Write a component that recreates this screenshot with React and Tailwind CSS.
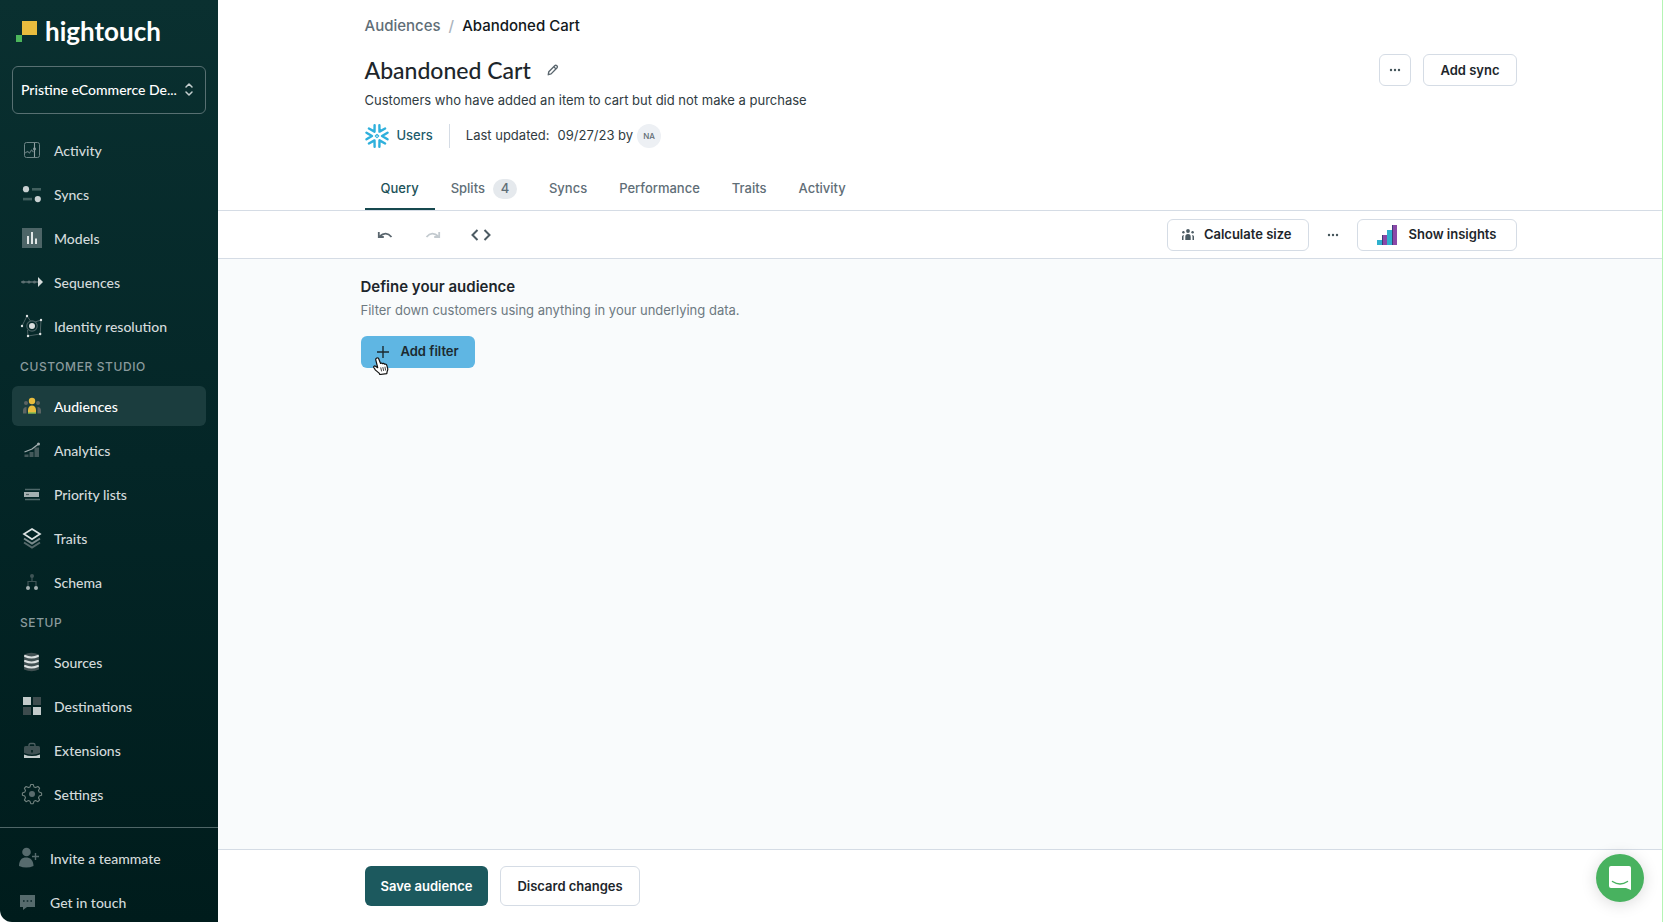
import React from "react";

const light = "#c9d1d2";

function Icon({ children }) {
  return (
    <svg width="24" height="24" viewBox="0 0 24 24" fill="none" className="shrink-0" aria-hidden="true">
      {children}
    </svg>
  );
}

const icons = {
  activity: (
    <Icon>
      <rect x="4.5" y="4.5" width="15" height="15" rx="2" stroke="#6f8587" strokeWidth="1" />
      <path d="M5 15l2.5-1.5 2 1.500 2-3 2 2" stroke="#5d7577" strokeWidth="1.1" />
      <path d="M14.5 5v14" stroke="#8fa0a2" strokeWidth="1.1" />
      <circle cx="14.5" cy="11" r="1.4" fill="#8fa0a2" />
    </Icon>
  ),
  syncs: (
    <Icon>
      <circle cx="6" cy="7.2" r="3.1" fill={light} />
      <rect x="12" y="6" width="9" height="2.6" fill="#42605f" />
      <rect x="3" y="15.8" width="9" height="2.6" fill="#42605f" />
      <circle cx="17.8" cy="17.1" r="3.1" fill={light} />
    </Icon>
  ),
  models: (
    <Icon>
      <rect x="2" y="2" width="20" height="20" fill="#4d6567" />
      <path d="M8 18V10M12 18V6M16 18v-5.5" stroke="#e1e6e6" strokeWidth="2" />
    </Icon>
  ),
  sequences: (
    <Icon>
      <path d="M1 12h17" stroke="#5d7072" strokeWidth="1.4" />
      <circle cx="3.4" cy="12" r="1.6" fill="#5d7072" />
      <circle cx="9" cy="12" r="1.6" fill="#5d7072" />
      <circle cx="14.5" cy="12" r="1.6" fill="#5d7072" />
      <path d="M18 7l5 5-5 5z" fill="#d5dbdb" />
    </Icon>
  ),
  identity: (
    <Icon>
      <circle cx="12" cy="12" r="5.2" stroke="#4a6163" strokeWidth="1.2" />
      <path d="M2 12l5-10 3.5 5M21 6l-.8 14-12.2 2-.5-6M15 8l6-2" stroke="#4a6163" strokeWidth="1" />
      <circle cx="12" cy="12" r="3" fill="#d9dddd" />
      <circle cx="2" cy="12" r="1.2" fill="#dfe4e4" />
      <circle cx="7" cy="2" r="1.2" fill="#dfe4e4" />
      <circle cx="21" cy="6" r="1.2" fill="#dfe4e4" />
      <circle cx="20.2" cy="20" r="1.2" fill="#dfe4e4" />
      <circle cx="8" cy="22" r="1.2" fill="#dfe4e4" />
    </Icon>
  ),
  audiences: (
    <Icon>
      <circle cx="6" cy="9" r="2" fill="#5b6463" />
      <circle cx="18" cy="9" r="2" fill="#5b6463" />
      <path d="M3 19.5v-3a3.5 3.5 0 0 1 3.5-3.500v6.500zM21 19.500v-3a3.500 3.500 0 0 0-3.500-3.500v6.500z" fill="#5b6463" />
      <circle cx="12" cy="7" r="3.2" fill="#e9bd3e" />
      <path d="M8 19.500v-3.500a4 4.500 0 0 1 8 0v3.500z" fill="#e9bd3e" />
      <path d="M8 18.500h8v1H8z" fill="#4cb65b" />
    </Icon>
  ),
  analytics: (
    <Icon>
      <path d="M4.500 19v-2.500h4V19zM9.500 19v-5h4v5zM14.500 19V9.500H19V19z" fill="#44595b" />
      <path d="M4.500 14l7.500-3 6.500-5" stroke="#a3afb0" strokeWidth="1.3" />
      <circle cx="18.5" cy="6" r="1.5" fill="#a3afb0" />
    </Icon>
  ),
  priority: (
    <Icon>
      <path d="M5 7.500h15M5 17.500h15" stroke="#50686a" strokeWidth="1.5" />
      <rect x="4" y="10" width="15" height="5" fill="#a4afb0" />
      <path d="M6 12.500h3" stroke="#4f5f61" strokeWidth="1.2" />
    </Icon>
  ),
  traits: (
    <Icon>
      <path d="M4 16.500l8 5 8-5" stroke="#56696b" strokeWidth="2" />
      <path d="M4 12.500l8 5 8-5" stroke="#7b8b8d" strokeWidth="2" />
      <path d="M12 3l8 5-8 5.300L4 8z" stroke="#dde3e3" strokeWidth="1.7" />
    </Icon>
  ),
  schema: (
    <Icon>
      <path d="M12 7v4.500M8 17v-5.500h8V17" stroke="#3f5456" strokeWidth="1.2" />
      <circle cx="12" cy="6" r="2" fill="#3f5456" />
      <circle cx="8" cy="18" r="2" fill="#a4b0b1" />
      <circle cx="16" cy="18" r="2" fill="#a4b0b1" />
    </Icon>
  ),
  sources: (
    <Icon>
      <path d="M4 4.500q7.500-3.500 15 0v15q-7.500 3.500-15 0z" fill="#405052" />
      <path d="M5 6q6.500 3 13 0M5 11q6.500 3 13 0M5 16q6.500 3 13 0" stroke="#dce2e2" strokeWidth="2" strokeLinecap="round" />
    </Icon>
  ),
  destinations: (
    <Icon>
      <rect x="3" y="3" width="8" height="8" fill="#c3cbcb" />
      <rect x="13" y="3" width="8" height="8" fill="#3d4c4e" />
      <rect x="3" y="13" width="8" height="8" fill="#3d4c4e" />
      <rect x="13" y="13" width="8" height="8" fill="#c3cbcb" />
    </Icon>
  ),
  extensions: (
    <Icon>
      <path d="M9 8.500V7q0-1.500 1.500-1.500h3Q15 5.500 15 7v1.500" stroke="#4f6062" strokeWidth="1.3" />
      <path d="M4 9.500Q4 8 5.500 8h13Q20 8 20 9.500V15q-8 3.500-16 0z" fill="#3f5153" />
      <path d="M4 16.500q8 3 16 0V20H4z" fill="#c6cece" />
      <rect x="11.2" y="12" width="1.6" height="2.5" fill="#01201f" />
    </Icon>
  ),
  settings: (
    <Icon>
      <path
        d="M10.8 2.500h2.400l.8 2.400 1.600.7 2.300-1.100 1.700 1.700-1.100 2.300.7 1.600 2.400.8v2.400l-2.400.8-.7 1.600 1.100 2.300-1.700 1.700-2.300-1.100-1.600.7-.8 2.400h-2.400l-.8-2.400-1.600-.7-2.300 1.100-1.700-1.700 1.100-2.300-.7-1.600-2.400-.8v-2.400l2.400-.8.7-1.600-1.100-2.300 1.700-1.700 2.300 1.100 1.600-.7z"
        stroke="#71827f"
        strokeWidth="1.1"
        strokeLinejoin="round"
      />
      <circle cx="12" cy="12" r="3" fill="#5a6c6e" />
    </Icon>
  ),
};

const primary = [
  ["activity", "Activity"],
  ["syncs", "Syncs"],
  ["models", "Models"],
  ["sequences", "Sequences"],
  ["identity", "Identity resolution"],
];
const studio = [
  ["audiences", "Audiences"],
  ["analytics", "Analytics"],
  ["priority", "Priority lists"],
  ["traits", "Traits"],
  ["schema", "Schema"],
];
const setup = [
  ["sources", "Sources"],
  ["destinations", "Destinations"],
  ["extensions", "Extensions"],
  ["settings", "Settings"],
];

function NavGroup({ title, items, active }) {
  return (
    <>
      {title && (
        <h2 className="flex h-8 items-center px-2 pt-[2px] font-['Inter',sans-serif] text-[12px] font-medium tracking-wider text-[#8a9b9d] uppercase">
          {title}
        </h2>
      )}
      {items.map(([icon, label]) => (
        <a
          key={label}
          href="#"
          aria-current={label === active ? "page" : undefined}
          className={`flex h-10 items-center gap-[10px] rounded-md px-2 text-[14px] font-medium ${
            label === active ? "bg-[#1b3d3e] text-white" : "text-[#d3dadb]"
          }`}
        >
          {icons[icon]}
          {label}
        </a>
      ))}
    </>
  );
}

function Sidebar() {
  return (
    <aside className="flex w-[218px] shrink-0 flex-col overflow-hidden rounded-bl-xl bg-linear-to-b from-[#0a3030] via-[#042627] to-[#001c1c] font-['Lato',sans-serif]">
      <a href="#" className="mb-1 flex h-[62px] items-center gap-2 px-4 text-[26px] leading-8 font-bold text-white">
        <svg width="21" height="21" viewBox="0 0 21 21" aria-hidden="true">
          <path d="M6 0h15v14H6z" fill="#e9bd3e" />
          <path d="M0 14h6v7H0z" fill="#4cb65b" />
        </svg>
        hightouch
      </a>
      <div className="px-3">
        <button className="flex h-12 w-full items-center justify-between rounded-md border border-[#587072] px-2 pb-[2px] text-[14px] font-medium whitespace-nowrap text-white">
          Pristine eCommerce De...
          <svg width="16" height="16" viewBox="0 0 16 16" fill="none" stroke="#c5cfcf" strokeWidth="1.5" strokeLinecap="round" strokeLinejoin="round" aria-hidden="true">
            <path d="M5 6l3-3 3 3M5 11l3 3 3-3" />
          </svg>
        </button>
      </div>
      <nav className="flex flex-col gap-1 px-3 pt-4 pb-[13px]">
        <NavGroup items={primary} />
        <NavGroup title="Customer Studio" items={studio} active="Audiences" />
        <NavGroup title="Setup" items={setup} />
      </nav>
      <div className="flex flex-col gap-2 border-t border-[#4f6667] px-4 pt-3 text-[14px] font-medium text-[#d3dadb]">
        <a href="#" className="flex h-9 items-center gap-[10px]">
          <svg width="24" height="24" viewBox="0 0 24 24" className="shrink-0" aria-hidden="true">
            <circle cx="10.5" cy="6" r="4.3" fill="#566b6d" />
            <path d="M3 20c0-6 3-8.500 7-8.500s7.500 2.500 7.500 8.500q-7 3-14.500 0z" fill="#566b6d" />
            <path d="M19.500 7v7M16 10.500h7" stroke="#566b6d" strokeWidth="1.4" />
          </svg>
          Invite a teammate
        </a>
        <a href="#" className="flex h-9 items-center gap-[10px]">
          <svg width="24" height="24" viewBox="0 0 24 24" className="shrink-0" aria-hidden="true">
            <path d="M4 5h15v12h-8l-4 3v-3H4z" fill="#566b6d" />
            <path d="M7 11h1.600M10.700 11h1.600M14.400 11H16" stroke="#0b2728" strokeWidth="1.6" />
          </svg>
          Get in touch
        </a>
      </div>
    </aside>
  );
}

function Snowflake() {
  return (
    <svg width="24" height="24" viewBox="0 0 24 24" fill="none" stroke="#2fb0dc" strokeWidth="2.4" strokeLinecap="round" strokeLinejoin="round" aria-hidden="true">
      {[0, 60, 120, 180, 240, 300].map((angle) => (
        <path key={angle} d="M22.500 8.700L17 12l5.500 3.300" transform={`rotate(${angle} 12 12)`} />
      ))}
      <path d="M12 10.300l1.700 1.700-1.700 1.700-1.700-1.700z" strokeWidth="1.2" />
    </svg>
  );
}

function Dots() {
  return (
    <svg width="12" height="4" viewBox="0 0 12 4" fill="#44545a" aria-hidden="true">
      <circle cx="2" cy="2" r="1.2" />
      <circle cx="6" cy="2" r="1.2" />
      <circle cx="10" cy="2" r="1.2" />
    </svg>
  );
}

const outline = "rounded-md border border-[#d5dce5] bg-white font-semibold text-[#1d262b]";

function Header() {
  return (
    <header className="border-b border-[#d5dce5] bg-white">
      <div className="mx-auto flex max-w-[1280px] flex-col px-16">
        <nav aria-label="Breadcrumb" className="flex h-[52px] items-center gap-2 text-[15px] font-medium">
          <a href="#" className="text-[#5f6e77]">Audiences</a>
          <span className="text-[#aab4bd]">/</span>
          <span className="text-[#12181b]">Abandoned Cart</span>
        </nav>
        <div className="flex h-9 items-center gap-[10px]">
          <h1 className="font-['Lato',sans-serif] text-[23px] font-medium text-[#1d262b]">Abandoned Cart</h1>
          <button aria-label="Edit name" className="flex size-6 items-center justify-center">
            <svg width="12" height="12" viewBox="0 0 14 14" fill="none" stroke="#5a666e" strokeWidth="1.6" strokeLinejoin="round" aria-hidden="true">
              <path d="M1.500 12.500l.6-3.500L9 2q1.200-1.200 2.500 0t0 2.600L4.800 11.500z" />
              <path d="M8 3.300L10.400 5.700" />
            </svg>
          </button>
          <div className="ml-auto flex gap-3 text-[13px]">
            <button aria-label="More actions" className={`flex size-8 items-center justify-center ${outline}`}>
              <Dots />
            </button>
            <button className={`h-8 px-4 pt-px ${outline}`}>Add sync</button>
          </div>
        </div>
        <p className="flex h-6 items-center pt-[2px] text-[13px] text-[#303b41]">
          Customers who have added an item to cart but did not make a purchase
        </p>
        <div className="mt-3 flex h-6 items-center text-[13px] text-[#303b41]">
          <Snowflake />
          <a href="#" className="ml-2 font-medium text-[#1d5b6b]">Users</a>
          <span className="mx-4 h-6 w-px bg-[#d5dce5]" />
          <span>Last updated:</span>
          <span className="ml-2">09/27/23 by</span>
          <span className="ml-1 flex size-6 items-center justify-center rounded-full bg-[#edf0f4] text-[8px] font-medium text-[#5f6b73]">NA</span>
        </div>
        <div role="tablist" className="mt-5 flex h-[42px] text-[13px] font-medium text-[#5f6e77]">
          <button role="tab" aria-selected="true" className="border-b-2 border-[#17494f] px-4 pt-[2px] text-[#1c5259]">Query</button>
          <button role="tab" className="flex items-center gap-2 px-4">
            Splits
            <span className="flex h-5 w-6 items-center justify-center rounded-full bg-[#e5e9ed]">4</span>
          </button>
          <button role="tab" className="px-4">Syncs</button>
          <button role="tab" className="px-4">Performance</button>
          <button role="tab" className="px-4">Traits</button>
          <button role="tab" className="px-4">Activity</button>
        </div>
      </div>
    </header>
  );
}

function Toolbar() {
  return (
    <div className="border-b border-[#d5dce5] bg-white">
      <div className="mx-auto flex h-[47px] max-w-[1280px] items-center px-16 text-[13px]">
        <div className="flex gap-2">
          <button aria-label="Undo" className="flex h-8 w-10 items-center justify-center">
            <svg width="16" height="16" viewBox="0 0 16 16" fill="none" stroke="#5a666e" strokeWidth="1.8" aria-hidden="true">
              <path d="M2.500 9.500Q9 3.500 14.500 10" />
              <path d="M1.800 5v5h5" />
            </svg>
          </button>
          <button aria-label="Redo" disabled className="flex h-8 w-10 items-center justify-center">
            <svg width="16" height="16" viewBox="0 0 16 16" fill="none" stroke="#c3cacf" strokeWidth="1.8" aria-hidden="true">
              <path d="M13.500 9.500Q7 3.500 1.500 10" />
              <path d="M14.200 5v5h-5" />
            </svg>
          </button>
          <button aria-label="View SQL" className="flex h-8 w-10 items-center justify-center">
            <svg width="20" height="14" viewBox="0 0 20 14" fill="none" stroke="#4c5b63" strokeWidth="2" aria-hidden="true">
              <path d="M6.500 2l-5 5 5 5M13.500 2l5 5-5 5" />
            </svg>
          </button>
        </div>
        <div className="ml-auto flex items-center">
          <button className={`flex h-8 items-center gap-2 pr-4 pl-3 ${outline}`}>
            <svg width="16" height="16" viewBox="0 0 16 16" fill="#4c5b63" aria-hidden="true">
              <circle cx="8" cy="4" r="1.9" />
              <circle cx="3.4" cy="5.2" r="1.2" />
              <circle cx="12.6" cy="5.2" r="1.2" />
              <path d="M5.300 13V9.800a2.700 2.700 0 0 1 5.400 0V13zM2 13V9.500Q2 8 4 8q-.5 1-.5 2v3zM14 13V9.500Q14 8 12 8q.5 1 .5 2v3z" />
            </svg>
            Calculate size
          </button>
          <button aria-label="More size options" className="flex h-8 w-12 items-center justify-center">
            <Dots />
          </button>
          <button className={`flex h-8 w-[160px] items-center justify-center gap-3 ${outline}`}>
            <svg width="20" height="20" viewBox="0 0 20 20" aria-hidden="true">
              <path d="M0 15h5v5H0zM10 5h5v15h-5z" fill="#2fb0cd" />
              <path d="M5 10h5v10H5zM15 0h5v20h-5z" fill="#8a48a8" />
              <path d="M5 10h1v10H5zM15 0h1v20h-1z" fill="#3d3d78" />
            </svg>
            Show insights
          </button>
        </div>
      </div>
    </div>
  );
}

function Pointer() {
  return (
    <svg width="16" height="18" viewBox="0 0 16 18" className="pointer-events-none absolute top-[21px] left-3" aria-hidden="true">
      <path
        d="M3.800 1c1-.4 1.700.2 2.100 1.200l1.700 4.300c.5-.7 1.500-.6 1.900.2.700-.6 1.700-.3 2 .5 1-.4 2 .1 2.300 1.200l.9 3.200c.3 1.300-.3 2.200-.6 3.100l-.3 2-7 .800-.7-1.400-3.600-3-1.700-2.600c-.5-1 .7-2 1.700-1.300l2.200 1.500-2-8c-.1-.9.400-1.400 1.100-1.700z"
        fill="#fff"
        stroke="#111"
        strokeWidth="1.2"
        strokeLinejoin="round"
      />
      <path d="M7.800 10.800l.7 3.200M9.900 10.500l.7 3.100M12 10.100l.6 3.100" stroke="#111" strokeWidth=".8" strokeLinecap="round" />
    </svg>
  );
}

export default function App() {
  return (
    <div className="flex min-h-screen bg-white font-['Inter',sans-serif]">
      <Sidebar />
      <main className="flex min-w-0 grow flex-col">
        <Header />
        <Toolbar />
        <section className="grow bg-[#f9fbfc]">
          <div className="mx-auto max-w-[1280px] px-15 pt-4">
            <h2 className="text-[15px] leading-6 font-semibold text-[#1d262b]">Define your audience</h2>
            <p className="text-[13px] leading-[22px] text-[#6d7981]">Filter down customers using anything in your underlying data.</p>
            <div className="relative mt-[15px] flex">
              <button className="flex h-8 items-center gap-3 rounded-md bg-[#5fb6e3] px-4 text-[13px] font-semibold text-[#1c2a30]">
                <svg width="12" height="12" viewBox="0 0 12 12" stroke="#1c2a30" strokeWidth="1.4" aria-hidden="true">
                  <path d="M6 0v12M0 6h12" />
                </svg>
                Add filter
              </button>
              <Pointer />
            </div>
          </div>
        </section>
        <footer className="border-t border-[#d5dce5] bg-white">
          <div className="mx-auto flex h-[72px] max-w-[1280px] items-center gap-3 px-16 text-[13px]">
            <button className="h-10 rounded-md bg-[#1c595e] px-4 pt-px font-semibold text-white">Save audience</button>
            <button className={`h-10 px-4 pt-px ${outline}`}>Discard changes</button>
          </div>
        </footer>
      </main>
      <div className="fixed inset-y-0 right-0 w-px bg-[#b4f5b4]" />
      <button
        aria-label="Open chat"
        className="fixed right-[19px] bottom-5 flex size-12 items-center justify-center rounded-full bg-[#48b25f] shadow-[0_2px_16px_rgba(0,0,0,0.15)]"
      >
        <svg width="22" height="24" viewBox="0 0 22 24" aria-hidden="true">
          <path d="M2 0h18q2 0 2 2v22l-5-2H2q-2 0-2-2V2q0-2 2-2z" fill="#fff" />
          <path d="M3.500 15.500q7.500 5 15 0" fill="none" stroke="#48b25f" strokeWidth="1.5" strokeLinecap="round" />
        </svg>
      </button>
    </div>
  );
}
